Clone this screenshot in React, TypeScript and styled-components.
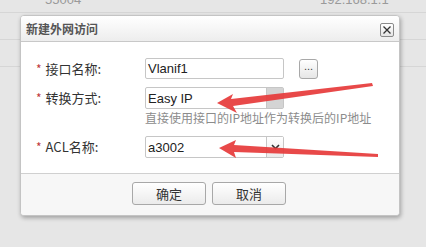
import React from 'react';
import styled, { createGlobalStyle } from 'styled-components';

const GlobalStyle = createGlobalStyle`
  html, body {
    margin: 0;
    padding: 0;
    background: #e6e6e6;
    font-family: "Liberation Sans", "Noto Sans CJK SC", sans-serif;
    overflow: hidden;
  }
`;

const Page = styled.div`
  position: relative;
  width: 426px;
  height: 247px;
  overflow: hidden;
  background: #e6e6e6;
`;

const BgTable = styled.div`
  display: flex;
  flex-direction: column;
  margin-top: -14px;
`;

const BgRow = styled.div`
  display: flex;
  height: 26px;
  align-items: center;
  border-bottom: 1px solid #d6d6d6;
  color: #9a9a9a;
  font-size: 13px;
`;

const BgCell = styled.div<{ $width: number }>`
  width: ${p => p.$width}px;
  flex-shrink: 0;
`;

const Dialog = styled.div`
  position: absolute;
  left: 20px;
  top: 15px;
  width: 378px;
  display: flex;
  flex-direction: column;
  background: #fff;
  border: 1px solid #c4c4c4;
  border-radius: 4px;
  box-shadow: 1px 2px 4px rgba(0, 0, 0, 0.3);
  overflow: hidden;
`;

const TitleBar = styled.div`
  height: 25px;
  display: flex;
  align-items: center;
  justify-content: space-between;
  padding: 0 5px 0 5px;
  background: linear-gradient(#ffffff, #ededed);
  border-bottom: 1px solid #c8c8c8;
`;

const Title = styled.span`
  font-family: "Noto Sans CJK SC", sans-serif;
  font-size: 12px;
  font-weight: bold;
  color: #555;
`;

const CloseButton = styled.button`
  width: 14px;
  height: 14px;
  padding: 0;
  margin-top: 2px;
  display: flex;
  align-items: center;
  justify-content: center;
  border: 1px solid #8a8a8a;
  border-radius: 2px;
  background: linear-gradient(#ffffff, #e4e4e4);
`;

const Body = styled.div`
  display: flex;
  flex-direction: column;
  padding: 16px 0 15px 16px;
  border-bottom: 1px solid #d0d0d0;
`;

const Row = styled.div<{ $mt?: number }>`
  display: flex;
  align-items: flex-start;
  margin-top: ${p => p.$mt ?? 0}px;
`;

const Label = styled.div`
  width: 108px;
  height: 21px;
  display: flex;
  align-items: center;
  font-family: "Noto Sans CJK SC", sans-serif;
  font-size: 13px;
  color: #333;
`;

const Star = styled.span`
  color: #c0393b;
  font-size: 12px;
  margin-right: 4px;
  margin-left: -1px;
`;

const Field = styled.div`
  display: flex;
  flex-direction: column;
`;

const FieldLine = styled.div`
  display: flex;
  align-items: center;
  gap: 15px;
`;

const TextBox = styled.div`
  width: 135px;
  height: 19px;
  border: 1px solid #c6c6c6;
  border-radius: 2px;
  display: flex;
  align-items: center;
  padding-left: 2px;
  font-size: 13px;
  color: #222;
  box-sizing: content-box;
`;

const SelectBox = styled.div`
  width: 137px;
  height: 20px;
  border: 1px solid #c6c6c6;
  border-radius: 2px;
  display: flex;
  align-items: stretch;
  font-size: 13px;
  color: #222;
`;

const SelectValue = styled.div`
  flex: 1;
  display: flex;
  align-items: center;
  padding-left: 2px;
`;

const DropButton = styled.div<{ $disabled?: boolean }>`
  width: 16px;
  border-left: 1px solid #c6c6c6;
  display: flex;
  align-items: center;
  justify-content: center;
  background: ${p => (p.$disabled ? '#d4d4d4' : 'linear-gradient(#ffffff, #ececec)')};
`;

const MoreButton = styled.button`
  width: 19px;
  height: 20px;
  padding: 0 0 4px;
  border: 1px solid #a8a8a8;
  border-radius: 3px;
  background: linear-gradient(#ffffff, #e6e6e6);
  font-size: 11px;
  color: #444;
  line-height: 1;
`;

const Hint = styled.div`
  margin-top: 1px;
  font-family: "Noto Sans CJK SC", sans-serif;
  font-size: 12px;
  line-height: 16px;
  color: #8c8c8c;
  white-space: nowrap;
`;

const Footer = styled.div`
  height: 41px;
  display: flex;
  align-items: center;
  justify-content: center;
  gap: 6px;
  background: #f7f7f7;
  padding-right: 2px;
`;

const Button = styled.button`
  width: 74px;
  height: 23px;
  margin-top: -3px;
  border: 1px solid #a8a8a8;
  border-radius: 3px;
  background: linear-gradient(#ffffff, #ebebeb);
  font-family: "Noto Sans CJK SC", sans-serif;
  font-size: 13px;
  color: #333;
`;

const Annotation = styled.svg`
  position: absolute;
  left: 0;
  top: 0;
  pointer-events: none;
`;

const Chevron = () => (
  <svg width="9" height="6" viewBox="0 0 9 6">
    <path d="M1 1 L4.5 4.5 L8 1" fill="none" stroke="#333" strokeWidth="1.6" />
  </svg>
);

export default function App() {
  return (
    <Page>
      <GlobalStyle />
      <BgTable>
        <BgRow>
          <BgCell $width={45} />
          <BgCell $width={275}>55004</BgCell>
          <BgCell $width={80}>192.168.1.1</BgCell>
        </BgRow>
        <BgRow />
        <BgRow />
      </BgTable>

      <Dialog>
        <TitleBar>
          <Title>新建外网访问</Title>
          <CloseButton aria-label="close">
            <svg width="10" height="10" viewBox="0 0 10 10">
              <path d="M1.5 1.5 L8.5 8.5 M8.5 1.5 L1.5 8.5" stroke="#333" strokeWidth="1.3" />
            </svg>
          </CloseButton>
        </TitleBar>
        <Body>
          <Row>
            <Label>
              <Star>*</Star>接口名称:
            </Label>
            <FieldLine>
              <TextBox>Vlanif1</TextBox>
              <MoreButton>...</MoreButton>
            </FieldLine>
          </Row>
          <Row $mt={8}>
            <Label>
              <Star>*</Star>转换方式:
            </Label>
            <Field>
              <SelectBox>
                <SelectValue>Easy IP</SelectValue>
                <DropButton $disabled />
              </SelectBox>
              <Hint>直接使用接口的IP地址作为转换后的IP地址</Hint>
            </Field>
          </Row>
          <Row $mt={10}>
            <Label>
              <Star>*</Star>ACL名称:
            </Label>
            <SelectBox>
              <SelectValue>a3002</SelectValue>
              <DropButton>
                <Chevron />
              </DropButton>
            </SelectBox>
          </Row>
        </Body>
        <Footer>
          <Button>确定</Button>
          <Button>取消</Button>
        </Footer>
      </Dialog>

      <Annotation width="426" height="247" viewBox="0 0 426 247">
        <polygon
          points="217,103 233,94 231,99 372,83 373,86 233,106 237,113"
          fill="#e63a3a"
          opacity="0.92"
        />
        <polygon
          points="219,148 236,140 234,145 378,154 378,157 234,152 236,158"
          fill="#e63a3a"
          opacity="0.92"
        />
      </Annotation>
    </Page>
  );
}
